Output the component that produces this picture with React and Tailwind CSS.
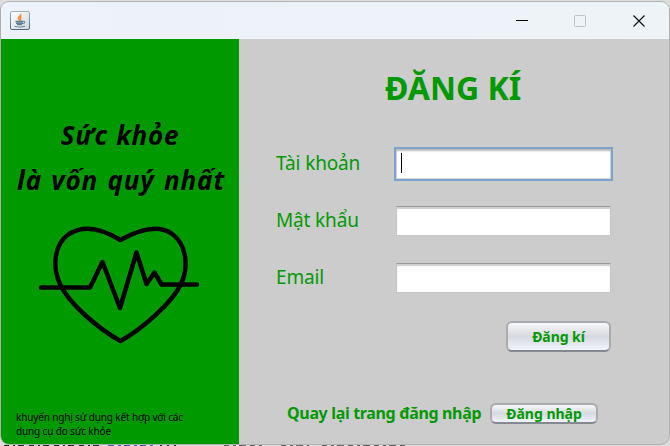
import React from "react";

const font = "font-['Noto_Sans','Open_Sans',sans-serif]";

function JavaIcon() {
  return (
    <svg width="20" height="20" viewBox="0 0 20 20">
      <defs>
        <linearGradient id="jb" x1="0" y1="0" x2="0" y2="1">
          <stop offset="0" stopColor="#9fb0c0" />
          <stop offset="1" stopColor="#4f6b88" />
        </linearGradient>
        <linearGradient id="jf" x1="0" y1="0" x2="1" y2="1">
          <stop offset="0" stopColor="#ffffff" />
          <stop offset="1" stopColor="#d2d6da" />
        </linearGradient>
      </defs>
      <rect x="0.5" y="0.5" width="19" height="18" rx="1.5" fill="url(#jf)" stroke="url(#jb)" />
      <path d="M10.8 3c.7 1.800-3.300 2.800-2.500 4.600.3.800 1.300 1.200 1 2.200M11.500 5.500c-2 1-1.500 2-.8 2.700.3.500 0 1-.5 1.500" fill="none" stroke="#ee8a45" strokeWidth="1.500" />
      <path d="M5.500 10.500h8M6 12.200h7M7 13.600h5" fill="none" stroke="#5f809b" strokeWidth="1.500" />
      <path d="M13.300 10.500c2-.6 2.200 1.700-.5 2.500M4.500 15.300c2 .9 8 .9 10.500-.3" fill="none" stroke="#6c8aa3" strokeWidth="1.100" />
    </svg>
  );
}

function HeartPulse() {
  return (
    <svg width="164" height="122" viewBox="38 224 164 122" fill="none" stroke="#000" strokeWidth="4.500" strokeLinecap="round" strokeLinejoin="round">
      <path d="M120.500 240C101 228 84 224.500 69 234C54 244 52 267 60 284C69 304 99 329 120.500 341C142 329 172 303 181 284C189 267 187 244 171 233C157 224.500 140 229 120.500 240Z" />
      <path d="M41 287.500H90L102.500 262L120 308L136.500 252.500L146.500 284L154.500 272.500L161.500 284.500H197" />
    </svg>
  );
}

function Field({ label, focused }) {
  return (
    <label className="flex h-[57px] items-start">
      <span className="w-[118px] whitespace-nowrap text-[19px] leading-[28px] tracking-[-0.15px] text-[#009900]">{label}</span>
      {focused ? (
        <span className="-mt-[2px] h-[34px] w-[219px] border-2 border-[#7ba3d0] bg-white px-[5px] py-[4px] shadow-[inset_0_2px_2px_#b9b9b9,inset_0_0_0_1px_#d8d8d8]">
          <span className="block h-[20px] w-px bg-black" />
        </span>
      ) : (
        <span className="ml-[2px] h-[30px] w-[215px] border border-[#c6c6c6] border-t-[#9b9b9b] bg-white shadow-[inset_0_2px_1px_#cfcfcf]" />
      )}
    </label>
  );
}

function BackdropEdge() {
  return (
    <svg className="absolute bottom-0 left-0" width="670" height="446" viewBox="0 0 670 446" fill="none">
      <path d="M4 445.500H104" stroke="#222" strokeDasharray="5 4 2 3 6 5" />
      <path d="M108 445.500H156" stroke="#3b5aa8" strokeDasharray="6 4 3 3" />
      <path d="M160 445.500H176" stroke="#222" strokeDasharray="2 5" />
      <path d="M224 445.500H264M281 445.500H309M322 445.500H408" stroke="#666" strokeDasharray="5 4 3 3 7 4" />
    </svg>
  );
}

export default function App() {
  return (
    <div className={"relative h-[446px] w-[670px] overflow-hidden bg-[#dedede] pt-px " + font}>
      <BackdropEdge />
      <div className="relative flex h-[444px] w-[670px] flex-col overflow-hidden rounded-[9px] border border-[#b0b0b0] bg-[#cccccc]">
        <header className="flex h-[37px] shrink-0 items-center bg-gradient-to-r from-[#edf2fb] to-[#eef3f7] pl-[9px]">
          <JavaIcon />
          <div className="ml-auto flex pr-[23px]">
            <svg width="131" height="14" viewBox="0 0 131 14" fill="none">
              <path d="M1 6.500h12" stroke="#000" />
              <rect x="59.500" y="1.500" width="11" height="11" rx="1" stroke="#bfc3c7" />
              <path d="M118.500 1.500l11 11M129.500 1.500l-11 11" stroke="#111" strokeWidth="1.200" />
            </svg>
          </div>
        </header>
        <div className="flex flex-1">
          <aside className="flex w-[238px] flex-col items-center bg-[#009900] text-black">
            <h2 className="mt-[74px] whitespace-nowrap text-center text-[26px] font-bold italic leading-[45px]">
              <span className="block tracking-[0.7px] [word-spacing:1px]">Sức khỏe</span>
              <span className="block pl-[2px] tracking-[0.9px] [word-spacing:1.5px]">là vốn quý nhất</span>
            </h2>
            <div className="mt-[21px]"><HeartPulse /></div>
            <p className="mt-[64px] w-full whitespace-nowrap pl-[15px] text-[10px] leading-[14px] tracking-[-0.15px]">
              khuyến nghị sử dụng kết hợp với các<br />dụng cụ đo sức khỏe
            </p>
          </aside>
          <main className="flex flex-1 flex-col pl-[37px] text-[#009900]">
            <h1 className="mt-[26px] whitespace-nowrap pl-[109px] text-[32px] font-bold leading-[46px]">ĐĂNG KÍ</h1>
            <div className="mt-[38px]">
              <Field label="Tài khoản" focused />
              <Field label="Mật khẩu" />
              <Field label="Email" />
            </div>
            <button className="ml-[230px] mt-px h-[31px] w-[105px] whitespace-nowrap rounded-[6px] border-2 border-[#a9abaf] border-b-[#85888e] bg-linear-to-b from-[#f8f8fa] via-[#d6d9df] to-[#f1f4fd] pb-[1px] text-[14px] font-bold tracking-[-0.05px]">Đăng kí</button>
            <div className="mt-[50px] flex items-center">
              <span className="w-[214px] whitespace-nowrap pl-[11px] text-[16px] font-bold leading-[22px] tracking-[-0.34px]">Quay lại trang đăng nhập</span>
              <button className="flex h-[21px] w-[108px] items-center justify-center whitespace-nowrap rounded-[6px] border-2 border-[#a9abaf] border-b-[#85888e] bg-linear-to-b from-[#f8f8fa] via-[#d6d9df] to-[#f1f4fd] text-[14px] font-bold">Đăng nhập</button>
            </div>
          </main>
        </div>
      </div>
    </div>
  );
}
